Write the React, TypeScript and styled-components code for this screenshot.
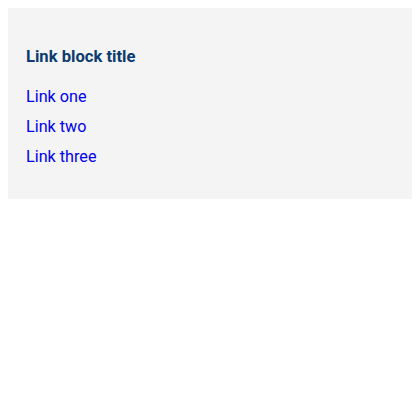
import React from 'react';
import styled, { createGlobalStyle } from 'styled-components';

const GlobalStyle = createGlobalStyle`
    body {
        margin: 8px;
        font-family: Roboto, "Noto Sans", Arial, sans-serif;
        background: #FFFFFF;
    }
`;

const Block = styled.nav`
    display: flex;
    flex-direction: column;

    padding: 37px 18px 27px;

    background: #F4F4F4;
`;

const Title = styled.h3`
    margin: 0 0 13px;

    font-size: 16.6px;
    font-weight: 700;
    line-height: 24px;

    color: #0B3B70;
`;

const List = styled.ul`
    display: flex;
    flex-direction: column;

    margin: 0;
    padding: 0;

    list-style: none;
`;

const Item = styled.li`
    font-size: 16.2px;
    line-height: 30px;
`;

const Link = styled.a`
    color: #0000EE;
    text-decoration: none;
`;

const links = ['Link one', 'Link two', 'Link three'];

export default function App() {
    return (
        <>
            <GlobalStyle />
            <Block>
                <Title>Link block title</Title>
                <List>
                    {links.map(label => (
                        <Item key={label}>
                            <Link href="#">{label}</Link>
                        </Item>
                    ))}
                </List>
            </Block>
        </>
    );
}
